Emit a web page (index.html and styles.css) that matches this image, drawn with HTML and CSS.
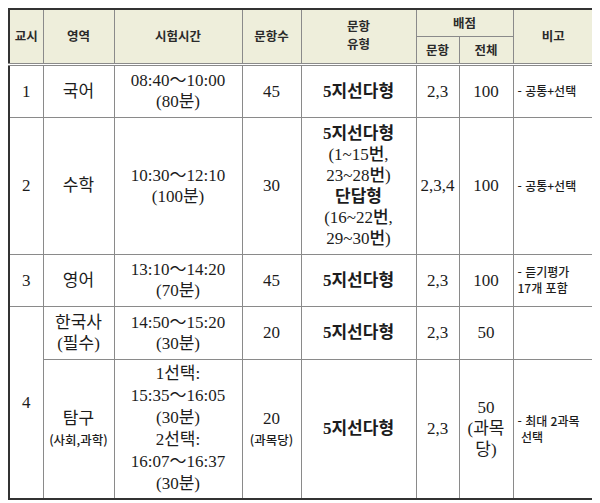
FILE: index.html
```html
<!DOCTYPE html>
<html lang="ko">
<head>
<meta charset="utf-8">
<link rel="stylesheet" href="styles.css">
</head>
<body>
<table class="exam">
  <colgroup>
    <col class="c-period">
    <col class="c-area">
    <col class="c-time">
    <col class="c-count">
    <col class="c-type">
    <col class="c-q">
    <col class="c-total">
    <col class="c-note">
  </colgroup>
  <thead>
    <tr class="h1">
      <th rowspan="2">교시</th>
      <th rowspan="2">영역</th>
      <th rowspan="2">시험시간</th>
      <th rowspan="2">문항수</th>
      <th rowspan="2" class="two">문항<br>유형</th>
      <th colspan="2">배점</th>
      <th rowspan="2">비고</th>
    </tr>
    <tr class="h2">
      <th>문항</th>
      <th>전체</th>
    </tr>
  </thead>
  <tbody>
    <tr class="r1">
      <td>1</td>
      <td>국어</td>
      <td>08:40～10:00<br>(80분)</td>
      <td>45</td>
      <td class="type">5지선다형</td>
      <td>2,3</td>
      <td>100</td>
      <td class="note">- 공통+선택</td>
    </tr>
    <tr class="r2">
      <td>2</td>
      <td>수학</td>
      <td>10:30～12:10<br>(100분)</td>
      <td>30</td>
      <td class="type">5지선다형<br><span class="plain">(1~15번,<br>23~28번)</span><br>단답형<br><span class="plain">(16~22번,<br>29~30번)</span></td>
      <td>2,3,4</td>
      <td>100</td>
      <td class="note">- 공통+선택</td>
    </tr>
    <tr class="r3">
      <td>3</td>
      <td>영어</td>
      <td>13:10～14:20<br>(70분)</td>
      <td>45</td>
      <td class="type">5지선다형</td>
      <td>2,3</td>
      <td>100</td>
      <td class="note">- 듣기평가<br>17개 포함</td>
    </tr>
    <tr class="r4a">
      <td rowspan="2">4</td>
      <td>한국사<br>(필수)</td>
      <td>14:50～15:20<br>(30분)</td>
      <td>20</td>
      <td class="type">5지선다형</td>
      <td>2,3</td>
      <td>50</td>
      <td class="note"></td>
    </tr>
    <tr class="r4b">
      <td>탐구<br><span class="small">(사회,과학)</span></td>
      <td class="tall">1선택:<br>15:35～16:05<br>(30분)<br>2선택:<br>16:07～16:37<br>(30분)</td>
      <td>20<br><span class="small">(과목당)</span></td>
      <td class="type">5지선다형</td>
      <td>2,3</td>
      <td>50<br>(과목<br>당)</td>
      <td class="note">- 최대 2과목<br>&nbsp;선택</td>
    </tr>
  </tbody>
</table>
</body>
</html>
```

FILE: styles.css
```css
html, body {
  background: #ffffff;
}

body {
  margin: 8px;
  font-family: "Liberation Serif", "Noto Sans CJK KR", serif;
  color: #1c1c1c;
}

.exam {
  border-collapse: collapse;
  table-layout: fixed;
  width: 585px;
  border: 2px solid #333333;
}

.c-period { width: 34px; }
.c-area   { width: 71px; }
.c-time   { width: 128px; }
.c-count  { width: 59px; }
.c-type   { width: 115px; }
.c-q      { width: 43px; }
.c-total  { width: 54px; }
.c-note   { width: 81px; }

.exam th,
.exam td {
  border: 1px solid #8a8a8a;
  padding: 0 2px;
  text-align: center;
  vertical-align: middle;
  overflow: hidden;
}

.exam th {
  background: #eeeedb;
  font-family: "Noto Sans CJK KR", sans-serif;
  font-size: 12.5px;
  font-weight: 700;
  line-height: 16px;
  color: #2a2a2a;
}

.exam th.two {
  line-height: 18px;
  padding-bottom: 2px;
}

.exam thead tr.h2 th,
.exam thead tr.h1 th[rowspan] {
  border-bottom: 3px double #8a8a8a;
}

.h1 { height: 27px; }
.h2 { height: 28px; }

.exam td {
  font-size: 17px;
  line-height: 21px;
}

.exam td.tall {
  line-height: 22px;
}

.exam td.type {
  font-weight: 700;
  font-size: 17px;
}

.exam td.type .plain {
  font-weight: 500;
}

.exam td.note {
  text-align: left;
  font-family: "Noto Sans CJK KR", sans-serif;
  font-size: 12px;
  line-height: 16px;
  padding-left: 4px;
  font-weight: 500;
}

.small {
  font-family: "Noto Sans CJK KR", sans-serif;
  font-size: 12.5px;
  font-weight: 500;
}

.r1 { height: 53px; }
.r2 { height: 137px; }
.r3 { height: 52px; }
.r4a { height: 53px; }
.r4b { height: 140px; }
```
